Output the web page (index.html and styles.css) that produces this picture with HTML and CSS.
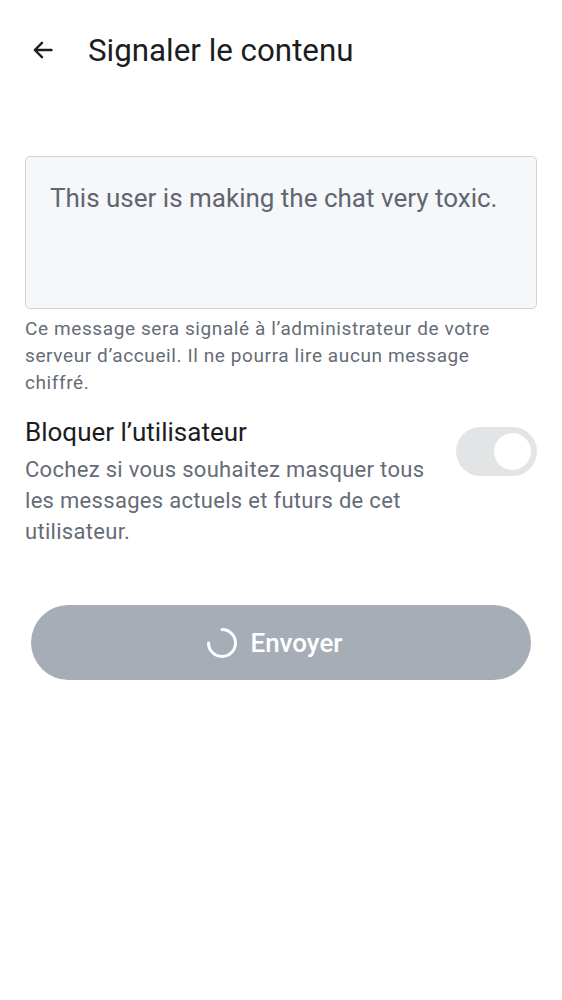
FILE: index.html
```html
<!DOCTYPE html>
<html lang="fr">
<head>
<meta charset="utf-8">
<link rel="stylesheet" href="styles.css">
</head>
<body>
<div class="screen">
  <header class="topbar">
    <button class="back" aria-label="Retour">
      <svg width="24" height="24" viewBox="0 0 24 24"><path d="M20.5 12H4M11 4.8L3.8 12L11 19.2" fill="none" stroke="#1b1d22" stroke-width="2.4" stroke-linecap="round" stroke-linejoin="round"/></svg>
    </button>
    <h1 class="title">Signaler le contenu</h1>
  </header>
  <main class="content">
    <div class="field">
      <div class="textarea">This user is making the chat very toxic.</div>
      <p class="helper">Ce message sera signalé à l’administrateur de votre serveur d’accueil. Il ne pourra lire aucun message chiffré.</p>
    </div>
    <div class="block-row">
      <div class="block-text">
        <div class="block-title">Bloquer l’utilisateur</div>
        <div class="block-desc">Cochez si vous souhaitez masquer tous les messages actuels et futurs de cet utilisateur.</div>
      </div>
      <div class="toggle"><span class="thumb"></span></div>
    </div>
    <button class="send">
      <svg class="spinner" width="32" height="32" viewBox="0 0 32 32"><path d="M16 2.5A13.5 13.5 0 1 1 2.5 16" fill="none" stroke="#fff" stroke-width="3" stroke-linecap="round"/></svg>
      <span>Envoyer</span>
    </button>
  </main>
</div>
</body>
</html>
```
FILE: styles.css
```css
* { box-sizing: border-box; }
html, body { margin: 0; padding: 0; background: #fff; }
body { font-family: Roboto, "Noto Sans", sans-serif; color: #1b1d22; }
.screen { width: 562px; min-height: 1000px; }
.topbar { display: flex; align-items: center; height: 100px; padding-left: 31px; }
.back { border: 0; background: none; padding: 0; width: 24px; height: 24px; display: flex; }
.title { margin: 0 0 0 33px; font-size: 31.3px; font-weight: 400; color: #1b1d22; }
.content { padding: 56px 25px 0; display: flex; flex-direction: column; }
.textarea { height: 153px; border: 1.5px solid #cfd4db; border-radius: 5px; background: #f6f7f9; padding: 26px 24px; font-size: 26px; line-height: 30px; color: #5f6672; }
.helper { margin: 6px 0 0; font-size: 19px; line-height: 27px; color: #656c77; letter-spacing: 0.6px; }
.block-row { display: flex; justify-content: space-between; align-items: flex-start; margin-top: 20px; }
.block-title { font-size: 26px; line-height: 32px; color: #1b1d22; }
.block-desc { margin-top: 6px; font-size: 22px; line-height: 31px; color: #656c77; width: 415px; letter-spacing: 0.3px; }
.toggle { flex: none; width: 81px; height: 49px; border-radius: 25px; background: #e3e4e5; margin-top: 11px; display: flex; align-items: center; justify-content: flex-end; padding-right: 6px; }
.thumb { width: 37px; height: 37px; border-radius: 50%; background: #fff; }
.send { margin: 58px 6px 0; height: 75px; border: 0; border-radius: 38px; background: #a7adb6; color: #fff; font-family: Roboto, sans-serif; font-size: 26px; font-weight: 500; display: flex; align-items: center; justify-content: center; gap: 12px; padding: 0 13px 0 0; }
.spinner { display: block; }
```
